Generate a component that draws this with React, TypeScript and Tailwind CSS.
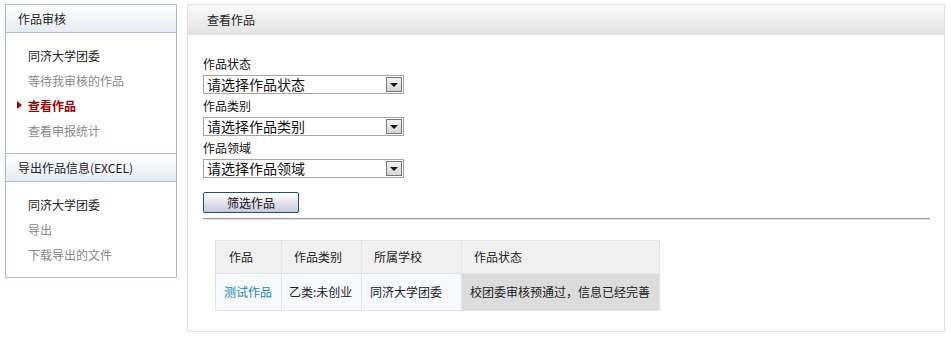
import React from "react";

const font = { fontFamily: '"Noto Sans CJK SC", "Liberation Sans", sans-serif' };

function SideItem({ text, kind }: { text: string; kind: "dark" | "gray" | "active" }) {
  if (kind === "active") {
    return (
      <div className="relative h-[25px] leading-[25px] pl-[22px] text-[12px] font-bold text-[#a00000]">
        <span className="absolute left-[11px] top-[8px] w-0 h-0 border-y-[4px] border-y-transparent border-l-[5px] border-l-[#a00000]" />
        {text}
      </div>
    );
  }
  return (
    <div
      className={
        "h-[25px] leading-[25px] pl-[22px] text-[12px] " +
        (kind === "dark" ? "text-[#222]" : "text-[#888]")
      }
    >
      {text}
    </div>
  );
}

function FakeSelect({ text }: { text: string }) {
  return (
    <div className="w-[201px] h-[19px] border border-[#a5a5a5] bg-white flex items-center justify-between">
      <span className="pl-[3px] text-[14px] leading-[17px] text-[#111]">{text}</span>
      <span className="mr-[1px] w-[16px] h-[15px] border border-[#777] bg-gradient-to-b from-[#f4f4f4] to-[#d4d4d4] flex items-center justify-center">
        <span className="w-0 h-0 border-x-[4px] border-x-transparent border-t-[4px] border-t-[#111]" />
      </span>
    </div>
  );
}

export default function App() {
  return (
    <div className="bg-white w-[951px] h-[342px] pt-[4px] pl-[5px] flex gap-[10px]" style={font}>
      {/* Sidebar */}
      <div className="w-[172px] h-[274px] border border-[#aebdd5] flex flex-col">
        <div className="h-[28px] border-b border-[#aebdd5] bg-gradient-to-b from-white to-[#e7ebf3] pl-[12px] leading-[27px] text-[12px] text-[#222]">
          作品审核
        </div>
        <div className="py-[10px]">
          <SideItem text="同济大学团委" kind="dark" />
          <SideItem text="等待我审核的作品" kind="gray" />
          <SideItem text="查看作品" kind="active" />
          <SideItem text="查看申报统计" kind="gray" />
        </div>
        <div className="h-[29px] border-y border-[#aebdd5] bg-gradient-to-b from-white to-[#e7ebf3] pl-[12px] leading-[27px] text-[12px] text-[#222]">
          导出作品信息(EXCEL)
        </div>
        <div className="py-[10px]">
          <SideItem text="同济大学团委" kind="dark" />
          <SideItem text="导出" kind="gray" />
          <SideItem text="下载导出的文件" kind="gray" />
        </div>
      </div>

      {/* Main */}
      <div className="w-[758px] h-[328px] border border-[#dedede] flex flex-col">
        <div className="h-[30px] border-b border-[#e4e4e4] bg-gradient-to-b from-[#fafafa] to-[#e3e3e3] pl-[19px] leading-[29px] text-[12px] text-[#222]">
          查看作品
        </div>
        <div className="pt-[17px] pl-[15px] pr-[14px]">
          <div className="h-[23px] leading-[23px] text-[12px] text-[#111]">作品状态</div>
          <FakeSelect text="请选择作品状态" />
          <div className="h-[23px] leading-[23px] text-[12px] text-[#111]">作品类别</div>
          <FakeSelect text="请选择作品类别" />
          <div className="h-[23px] leading-[23px] text-[12px] text-[#111]">作品领域</div>
          <FakeSelect text="请选择作品领域" />
          <div className="mt-[14px] w-[96px] h-[21px] rounded-[2px] border border-[#1e4f7e] bg-gradient-to-b from-white to-[#c9c9dc] text-center text-[12px] leading-[19px] text-[#111]">
            筛选作品
          </div>
          <div className="mt-[5px] h-[2px] border-t border-[#9a9a9a] border-b border-b-[#e2e2e2]" />
          <table className="mt-[20px] ml-[12px] border-collapse text-[12px]">
            <thead>
              <tr className="h-[33px] bg-[#f0f0f0] text-[#222]">
                <th className="w-[66px] border border-[#e3e3e3] font-normal text-left pl-[13px]">作品</th>
                <th className="w-[80px] border border-[#e3e3e3] font-normal text-left pl-[12px]">作品类别</th>
                <th className="w-[100px] border border-[#e3e3e3] font-normal text-left pl-[12px]">所属学校</th>
                <th className="w-[198px] border border-[#e3e3e3] font-normal text-left pl-[12px]">作品状态</th>
              </tr>
            </thead>
            <tbody>
              <tr className="h-[37px]">
                <td className="border border-[#e3e3e3] bg-[#f6f9fe] pl-[8px] text-[#1685b5]">测试作品</td>
                <td className="border border-[#e3e3e3] bg-[#f6f9fe] pl-[7px] text-[#222]">乙类:未创业</td>
                <td className="border border-[#e3e3e3] bg-[#f6f9fe] pl-[8px] text-[#222]">同济大学团委</td>
                <td className="border border-[#e3e3e3] bg-[#dcdcdc] pl-[8px] text-[#222]">校团委审核预通过，信息已经完善</td>
              </tr>
            </tbody>
          </table>
        </div>
      </div>
    </div>
  );
}
